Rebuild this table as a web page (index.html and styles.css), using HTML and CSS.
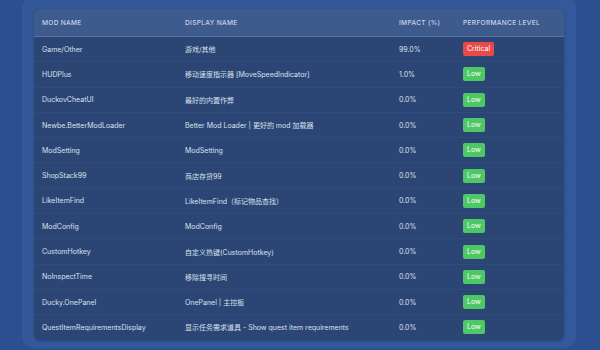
FILE: index.html
```html
<!DOCTYPE html>
<html>
<head>
<meta charset="utf-8">
<link rel="stylesheet" href="styles.css">
</head>
<body>
<div class="page">
  <div class="panel">
    <table class="mods">
      <colgroup>
        <col class="c1"><col class="c2"><col class="c3"><col class="c4">
      </colgroup>
      <thead>
        <tr><th>MOD NAME</th><th>DISPLAY NAME</th><th>IMPACT (%)</th><th>PERFORMANCE LEVEL</th></tr>
      </thead>
      <tbody>
        <tr><td>Game/Other</td><td>游戏/其他</td><td>99.0%</td><td><span class="badge crit">Critical</span></td></tr>
        <tr><td>HUDPlus</td><td>移动速度指示器 [MoveSpeedIndicator]</td><td>1.0%</td><td><span class="badge low">Low</span></td></tr>
        <tr><td>DuckovCheatUI</td><td>最好的内置作弊</td><td>0.0%</td><td><span class="badge low">Low</span></td></tr>
        <tr><td>Newbe.BetterModLoader</td><td>Better Mod Loader | 更好的 mod 加载器</td><td>0.0%</td><td><span class="badge low">Low</span></td></tr>
        <tr><td>ModSetting</td><td>ModSetting</td><td>0.0%</td><td><span class="badge low">Low</span></td></tr>
        <tr><td>ShopStack99</td><td>商店存货99</td><td>0.0%</td><td><span class="badge low">Low</span></td></tr>
        <tr><td>LikeItemFind</td><td>LikeItemFind（标记物品查找）</td><td>0.0%</td><td><span class="badge low">Low</span></td></tr>
        <tr><td>ModConfig</td><td>ModConfig</td><td>0.0%</td><td><span class="badge low">Low</span></td></tr>
        <tr><td>CustomHotkey</td><td>自定义热键(CustomHotkey)</td><td>0.0%</td><td><span class="badge low">Low</span></td></tr>
        <tr><td>NoInspectTime</td><td>移除搜寻时间</td><td>0.0%</td><td><span class="badge low">Low</span></td></tr>
        <tr><td>Ducky.OnePanel</td><td>OnePanel | 主控板</td><td>0.0%</td><td><span class="badge low">Low</span></td></tr>
        <tr><td>QuestItemRequirementsDisplay</td><td>显示任务需求道具 - Show quest item requirements</td><td>0.0%</td><td><span class="badge low">Low</span></td></tr>
      </tbody>
    </table>
  </div>
</div>
</body>
</html>
```

FILE: styles.css
```css
html, body {
  margin: 0;
  padding: 0;
  width: 600px;
  height: 350px;
  overflow: hidden;
  background: #2c4f8f;
  font-family: Inter, "Noto Sans CJK SC", sans-serif;
}
.page {
  padding: 0 24px 0 22px;
}
.panel {
  margin-top: -4px;
  background: #34599b;
  border-radius: 12px;
  padding: 13px 12px 8px 12px;
}
.mods {
  width: 530px;
  border-collapse: separate;
  border-spacing: 0;
  table-layout: fixed;
  background: #2b4674;
  border-radius: 6px;
  overflow: hidden;
  box-shadow: 0 1px 3px rgba(10, 25, 60, 0.35);
}
.c1 { width: 143px; }
.c2 { width: 214px; }
.c3 { width: 64px; }
.c4 { width: 109px; }
.mods th {
  height: 27px;
  padding: 0 8px;
  text-align: left;
  font-size: 6.6px;
  font-weight: 500;
  letter-spacing: 0.3px;
  color: #c9d3e6;
  background: #3e5b8d;
  border-bottom: 1px solid #5874a3;
  white-space: nowrap;
}
.mods td {
  height: 24.3px;
  padding: 0 8px;
  font-size: 7px;
  color: #d8e0ee;
  border-bottom: 1px solid #304c7b;
  white-space: nowrap;
  overflow: hidden;
}
.mods tbody tr:last-child td {
  border-bottom: none;
}
.badge {
  display: inline-block;
  height: 14px;
  line-height: 14px;
  padding: 0 4px;
  border-radius: 2px;
  font-size: 7px;
  color: #ffffff;
}
.crit { background: #e84a4c; }
.low { background: #4ec866; }
```
